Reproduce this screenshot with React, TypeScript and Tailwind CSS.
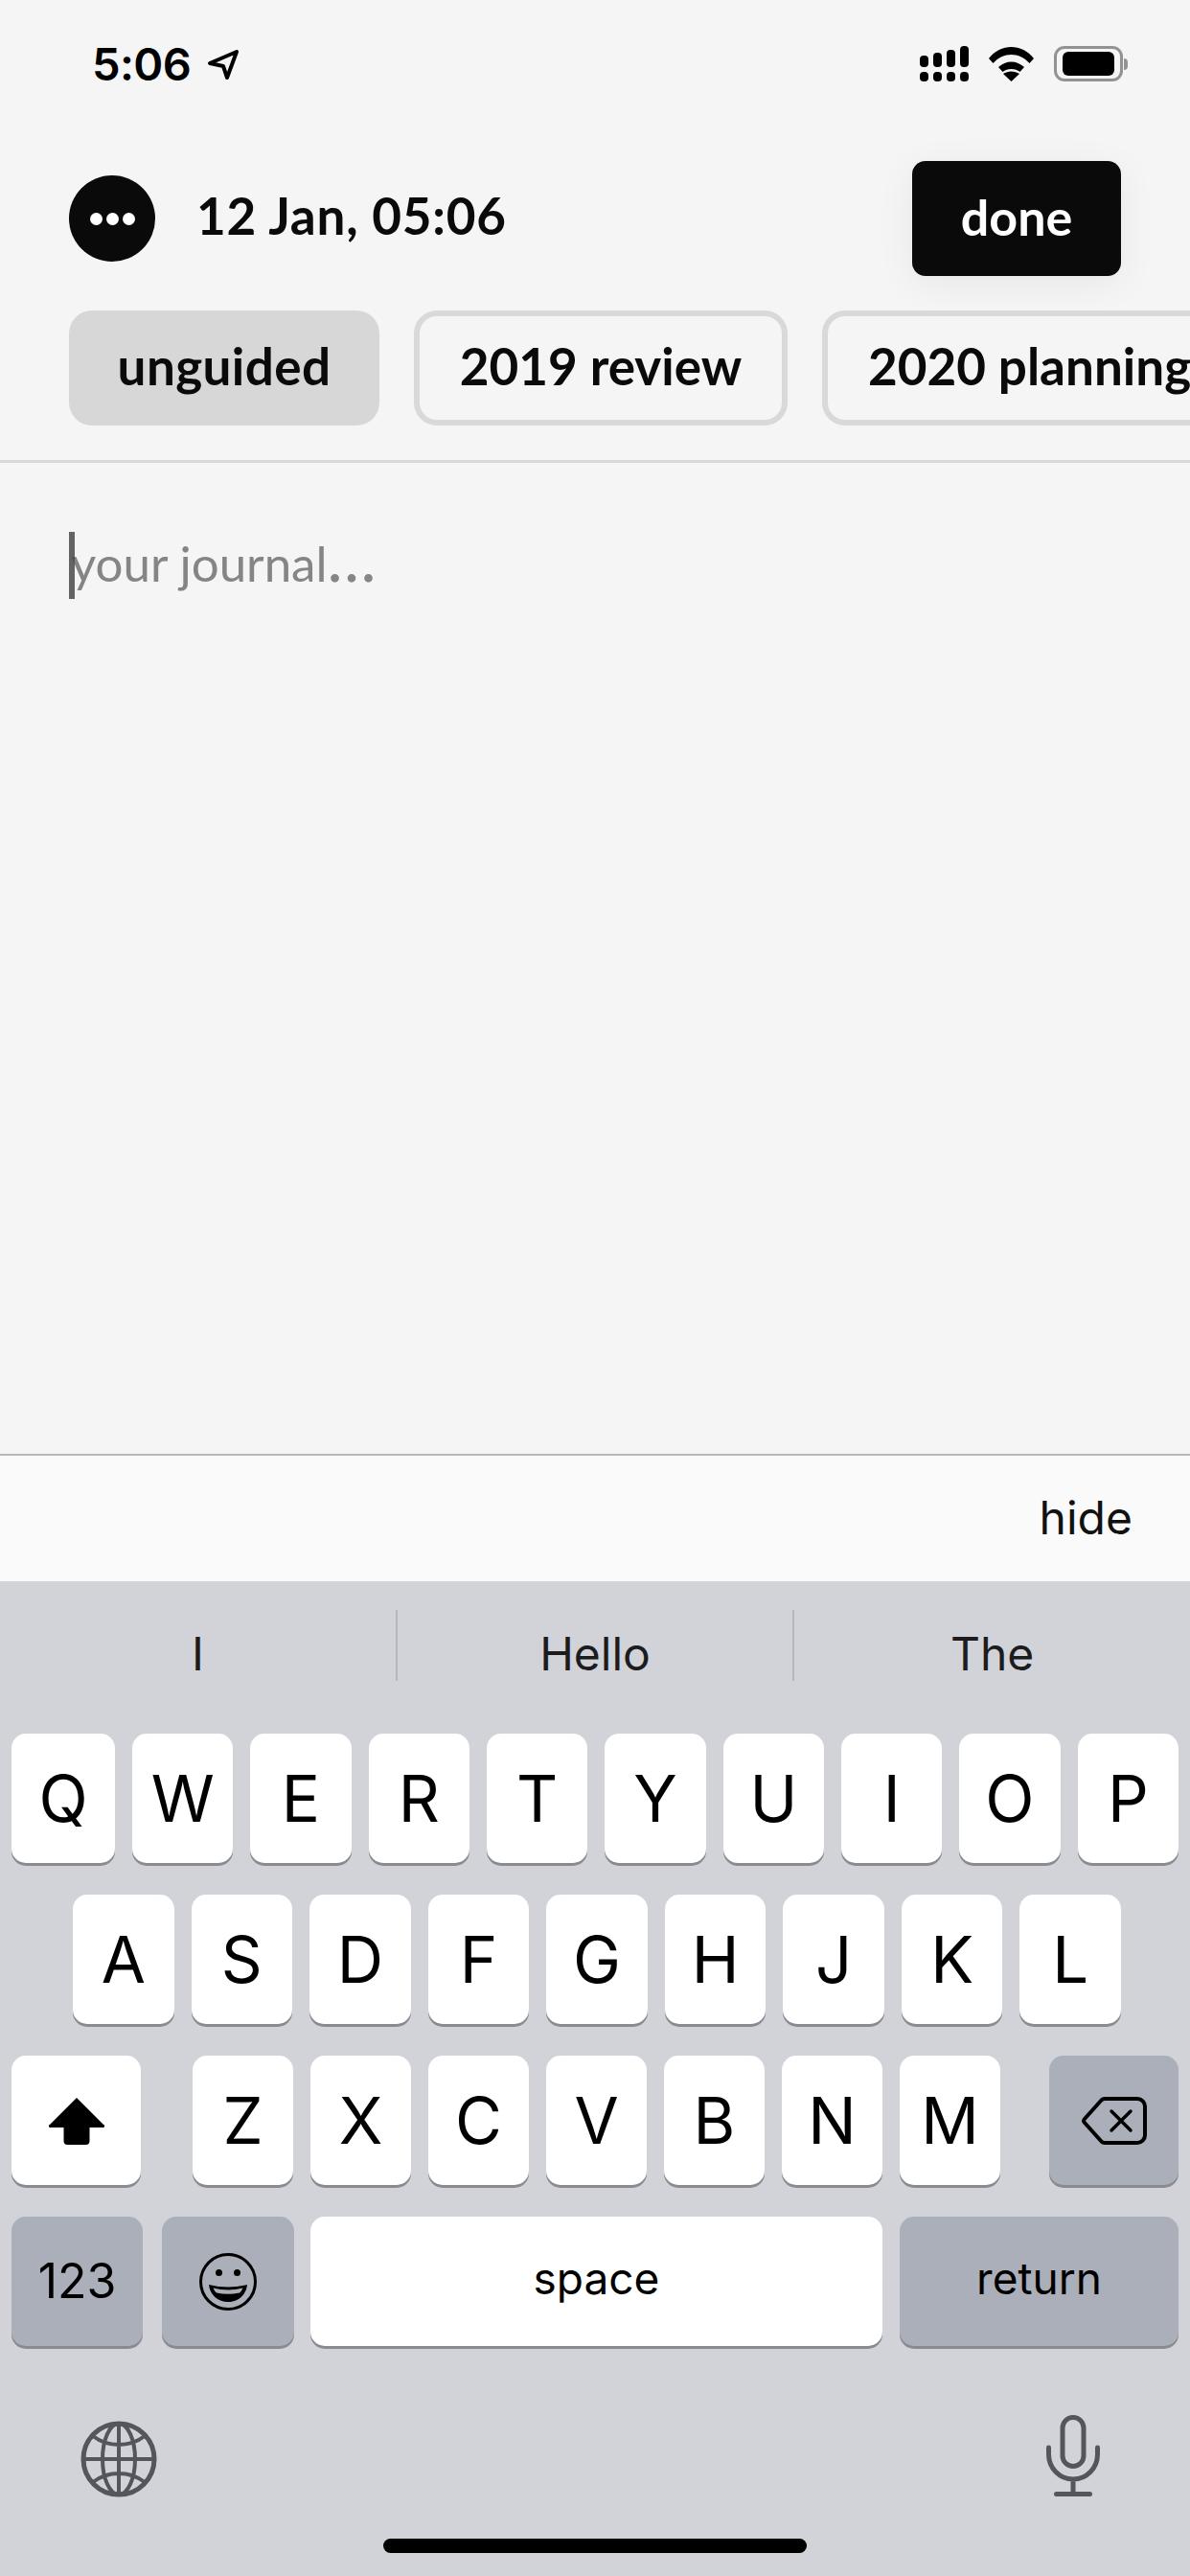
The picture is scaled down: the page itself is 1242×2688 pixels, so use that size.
const sf = "font-['Inter',sans-serif]";
const avenir = "font-['Lato',sans-serif]";

const rowOne = ["W", "E", "R", "T", "Y", "U", "I", "O", "P"];
const rowTwo = ["A", "S", "D", "F", "G", "H", "J", "K", "L"];
const rowThree = ["Z", "X", "C", "V", "B", "N", "M"];

function Key({ label, className = "" }: { label: string; className?: string }) {
  return (
    <div className={`flex h-[135px] items-center justify-center rounded-[15px] bg-white pt-[2px] text-[67px] text-black shadow-[0_3px_0_#8a8b90] ${className}`}>
      {label}
    </div>
  );
}

function GrayKey({ children, className = "" }: { children: React.ReactNode; className?: string }) {
  return (
    <div className={`flex h-[135px] items-center justify-center rounded-[15px] bg-[#abafb9] shadow-[0_3px_0_#8a8b90] ${className}`}>
      {children}
    </div>
  );
}

function StatusBar() {
  return (
    <div className="flex h-[168px] items-start justify-between pl-[96px] pr-[65px] pt-[44px]">
      <div className="flex items-center gap-[17px]">
        <span className={`${sf} text-[47px] font-semibold leading-[46px] tracking-[-0.6px] text-black`}>5:06</span>
        <svg width="34" height="33" viewBox="0 0 34 33" fill="none">
          <path d="M31 3 3 15l14 3 4 12z" stroke="#000" strokeWidth="4" strokeLinejoin="round" />
        </svg>
      </div>
      <div className="flex items-center gap-[21px] pt-[4px]">
        <svg width="51" height="37" viewBox="0 0 51 37" fill="#000">
          <rect x="0" y="10" width="9" height="12" rx="4" />
          <rect x="14" y="7" width="9" height="15" rx="4" />
          <rect x="28" y="4" width="9" height="18" rx="4" />
          <rect x="42" y="0" width="9" height="22" rx="4" />
          <rect x="0" y="27" width="9" height="10" rx="4" />
          <rect x="14" y="27" width="9" height="10" rx="4" />
          <rect x="28" y="27" width="9" height="10" rx="4" />
          <rect x="42" y="27" width="9" height="10" rx="4" />
        </svg>
        <svg width="47" height="36" viewBox="0 0 47 36" fill="#000">
          <path d="M0 12C6 4 15 0 23.500 0S41 4 47 12l-4.500 5C37 11 30.500 8 23.500 8S10 11 4.500 17z" />
          <path d="M10 21c4-3.500 8.500-5.500 13.500-5.500S33 17.500 37 21l-4.500 5c-2.500-2-5.500-3-9-3s-6.500 1-9 3z" />
          <path d="M23.500 36 15 28c2.500-1.500 5.500-2.500 8.500-2.500s6 1 8.500 2.500z" />
        </svg>
        <div className="flex items-center gap-[1px]">
          <div className="flex h-[37px] w-[72px] items-center justify-center rounded-[11px] border-[3px] border-[#929292]">
            <div className="h-[25px] w-[54px] rounded-[6px] bg-black" />
          </div>
          <div className="h-[12px] w-[4px] rounded-r-full bg-[#929292]" />
        </div>
      </div>
    </div>
  );
}

function ShiftIcon() {
  return (
    <svg width="58" height="50" viewBox="0 0 58 50" fill="#000">
      <path d="M29 1 57 29a1.500 1.500 0 0 1-1 3H42.500v14a4 4 0 0 1-4 4h-19a4 4 0 0 1-4-4V32H2a1.500 1.500 0 0 1-1-3z" />
    </svg>
  );
}

function DeleteIcon() {
  return (
    <svg width="68" height="50" viewBox="0 0 68 50" fill="none" stroke="#000">
      <path d="M24 2h34a8 8 0 0 1 8 8v30a8 8 0 0 1-8 8H24a5 5 0 0 1-3.500-1.500L3 27a3 3 0 0 1 0-4L20.500 3.500A5 5 0 0 1 24 2z" strokeWidth="4" strokeLinejoin="round" />
      <path d="m31 15 20 20M51 15 31 35" strokeWidth="3.500" strokeLinecap="round" />
    </svg>
  );
}

function EmojiIcon() {
  return (
    <svg width="60" height="60" viewBox="0 0 60 60" fill="none">
      <circle cx="30" cy="30" r="28.500" stroke="#000" strokeWidth="3" />
      <circle cx="20.500" cy="20.500" r="3.500" fill="#000" />
      <circle cx="39.500" cy="20.500" r="3.500" fill="#000" />
      <path d="M10 33Q30 38 50 33C49 44 40 51 30 51S11 44 10 33z" fill="#000" />
      <path d="M14.500 36.500Q30 40.500 45.500 36.500Q44 40 42 41.500Q30 44 18 41.500Q16 40 14.500 36.500z" fill="#abafb9" />
    </svg>
  );
}

function GlobeIcon() {
  return (
    <svg width="80" height="80" viewBox="0 0 80 80" fill="none" stroke="#53565c" strokeWidth="4">
      <circle cx="40" cy="40" r="37" strokeWidth="5" />
      <ellipse cx="40" cy="40" rx="17" ry="37" />
      <path d="M40 3v74M3 40h74M13 16c8 6 16 9 27 9s19-3 27-9M13 64c8-6 16-9 27-9s19 3 27 9" />
    </svg>
  );
}

function MicIcon() {
  return (
    <svg width="56" height="86" viewBox="0 0 56 86" fill="none" stroke="#53565c" strokeWidth="5">
      <rect x="17" y="2.500" width="22" height="51" rx="11" />
      <path d="M2.500 34v7c0 14 11 26 25.500 26s25.500-12 25.500-26v-7M28 67v15M10.500 82.500h35" strokeLinecap="round" />
    </svg>
  );
}

export default function App() {
  return (
    <div className="flex h-[2688px] w-[1242px] flex-col overflow-hidden bg-[#f5f5f5]">
      <StatusBar />

      {/* Date and done */}
      <div className="flex h-[120px] items-center justify-between pl-[72px] pr-[72px]">
        <div className="flex items-center gap-[43px]">
          <div className="flex h-[90px] w-[90px] items-center justify-center gap-[4px] rounded-full bg-[#0a0a0a]">
            <span className="h-[13px] w-[13px] rounded-full bg-white" />
            <span className="h-[13px] w-[13px] rounded-full bg-white" />
            <span className="h-[13px] w-[13px] rounded-full bg-white" />
          </div>
          <span className={`${avenir} pb-[7px] text-[53px] font-bold tracking-[0.8px] text-[#0a0a0a]`}>12 Jan, 05:06</span>
        </div>
        <div className={`${avenir} flex h-[120px] w-[218px] items-center justify-center rounded-[14px] bg-[#0a0a0a] pb-[4px] text-[52px] font-bold text-white shadow-[0_8px_40px_rgba(0,0,0,0.06)]`}>
          done
        </div>
      </div>

      {/* Prompt chips */}
      <div className={`${avenir} mt-[36px] flex gap-[36px] overflow-hidden pl-[72px] text-[53px] font-bold text-[#0a0a0a]`}>
        <div className="flex h-[120px] w-[324px] shrink-0 items-center justify-center rounded-[24px] bg-[#d7d7d7] pb-[4px] tracking-[0.4px]">unguided</div>
        <div className="flex h-[120px] w-[390px] shrink-0 items-center justify-center rounded-[24px] border-[6px] border-[#d9d9d9] pb-[4px]">2019 review</div>
        <div className="flex h-[120px] shrink-0 items-center rounded-[24px] border-[6px] border-[#d9d9d9] px-[42px] pb-[4px]">2020 planning</div>
      </div>
      <div className="mt-[36px] h-[3px] bg-[#d9d9d9]" />

      {/* Editor */}
      <div className="flex-1 pl-[72px] pt-[72px]">
        <div className="relative flex h-[70px] items-center">
          <span className="absolute left-0 top-0 h-[70px] w-[6px] bg-[#4a4a4a]/85" />
          <span className={`${avenir} pb-[6px] pl-[2px] text-[51px] font-normal text-[#858585]`}>
            your journal<span className="text-[68px] leading-none">…</span>
          </span>
        </div>
      </div>

      {/* Accessory bar */}
      <div className={`${sf} flex h-[133px] items-center justify-end border-t-2 border-[#b8b8b8] bg-[#fafafa] pb-[2px] pr-[60px] text-[48px] text-[#111]`}>
        hide
      </div>

      {/* Keyboard */}
      <div className={`${sf} flex flex-col bg-[#d1d3d9]`}>
        <div className="flex h-[159px] items-start pt-[30px] text-[48px] text-[#1c1c1e]">
          <div className="flex h-[74px] flex-1 items-center justify-center border-r-2 border-[#b6b8be] pt-[18px]">I</div>
          <div className="flex h-[74px] flex-1 items-center justify-center border-r-2 border-[#b6b8be] pt-[18px]">Hello</div>
          <div className="flex h-[74px] flex-1 items-center justify-center pt-[18px]">The</div>
        </div>

        <div className="flex flex-col gap-[33px] px-[12px]">
          <div className="flex gap-[18px]">
            <Key label="Q" className="w-[108px] shrink-0" />
            {rowOne.map((k) => (
              <Key key={k} label={k} className="min-w-0 flex-1" />
            ))}
          </div>
          <div className="ml-[64px] mr-[60px] grid grid-cols-9 gap-[18px]">
            {rowTwo.map((k) => (
              <Key key={k} label={k} />
            ))}
          </div>
          <div className="flex">
            <div className="flex h-[135px] w-[135px] items-center justify-center rounded-[15px] bg-white shadow-[0_3px_0_#8a8b90]">
              <ShiftIcon />
            </div>
            <div className="ml-[54px] grid w-[843px] grid-cols-7 gap-[18px]">
              {rowThree.map((k) => (
                <Key key={k} label={k} />
              ))}
            </div>
            <GrayKey className="ml-[51px] w-[135px]">
              <DeleteIcon />
            </GrayKey>
          </div>
          <div className="flex">
            <GrayKey className="w-[137px] text-[50px] text-black">123</GrayKey>
            <GrayKey className="ml-[20px] w-[138px]">
              <EmojiIcon />
            </GrayKey>
            <Key label="space" className="ml-[17px] w-[597px] pb-[6px] !pt-0 !text-[46px]" />
            <GrayKey className="ml-[18px] flex-1 pb-[6px] text-[46px] text-black">return</GrayKey>
          </div>
        </div>

        <div className="mt-[72px] flex items-end justify-between pl-[84px] pr-[94px]">
          <GlobeIcon />
          <MicIcon />
        </div>
        <div className="mx-auto mb-[24px] mt-[43px] h-[15px] w-[442px] rounded-full bg-black" />
      </div>
    </div>
  );
}
